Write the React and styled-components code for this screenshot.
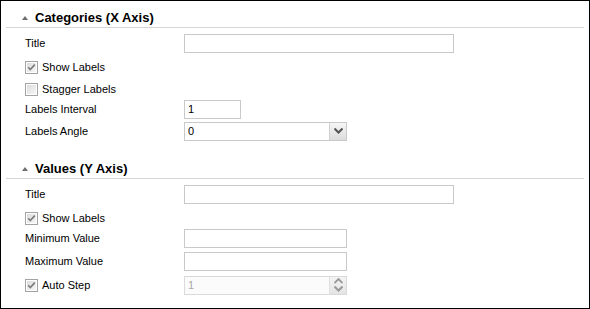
import React from "react";
import styled, { createGlobalStyle } from "styled-components";

const Global = createGlobalStyle`
  html, body { margin: 0; padding: 0; background: #fff; }
  body { font-family: "Liberation Sans", Arial, sans-serif; }
`;

const Panel = styled.div`
  width: 590px;
  height: 309px;
  box-sizing: border-box;
  border: 1px solid #000;
  background: #fff;
  color: #000;
  font-family: "Liberation Sans", Arial, sans-serif;
  font-size: 11px;
  overflow: hidden;
`;

const Section = styled.section`
  display: flex;
  flex-direction: column;
  margin-top: ${(p) => (p.$first ? "0" : "10px")};
`;

const Header = styled.div`
  display: flex;
  align-items: flex-end;
  height: 27px;
  padding: 0 0 1px 16px;
  margin: 0 5px;
  box-sizing: border-box;
  border-bottom: 1px solid #d6d6d6;
`;

const Arrow = styled.span`
  width: 0;
  height: 0;
  border-left: 3.5px solid transparent;
  border-right: 3.5px solid transparent;
  border-bottom: 4px solid #6e6e6e;
  margin: 0 7px 6px 0;
`;

const HeaderText = styled.span`
  font-weight: bold;
  font-size: 13px;
  line-height: 16px;
`;

const Rows = styled.div`
  display: flex;
  flex-direction: column;
  padding: 4px 0 0 24px;
`;

const Row = styled.div`
  display: flex;
  align-items: center;
  height: 22px;
  box-sizing: content-box;
  padding-top: ${(p) => p.$shift || 0}px;
  margin-bottom: ${(p) => -(p.$shift || 0)}px;
`;

const Label = styled.span`
  width: 159px;
  flex: none;
  white-space: nowrap;
`;

const TextInput = styled.div`
  box-sizing: border-box;
  width: ${(p) => p.$w}px;
  height: 19px;
  border: 1px solid #c9c9c9;
  background: #fff;
  display: flex;
  align-items: center;
  padding-left: 3px;
  font-size: 11px;
`;

const SelectBox = styled.div`
  box-sizing: border-box;
  width: 163px;
  height: 19px;
  border: 1px solid #c9c9c9;
  background: #fff;
  display: flex;
  align-items: center;
`;

const SelectValue = styled.span`
  flex: 1;
  padding-left: 3px;
`;

const SelectButton = styled.span`
  width: 17px;
  height: 100%;
  box-sizing: border-box;
  border-left: 1px solid #d0d0d0;
  background: linear-gradient(#f6f6f6, #dcdcdc);
  display: flex;
  align-items: center;
  justify-content: center;
`;

const SpinBox = styled.div`
  box-sizing: border-box;
  width: 163px;
  height: 19px;
  border: 1px solid #dadada;
  background: #fbfbfb;
  display: flex;
  align-items: center;
  color: #a8a8a8;
`;

const SpinButtons = styled.span`
  width: 17px;
  height: 100%;
  box-sizing: border-box;
  border-left: 1px solid #e0e0e0;
  background: linear-gradient(#f4f4f4, #e4e4e4);
  display: flex;
  flex-direction: column;
  align-items: center;
  justify-content: space-around;
`;

const CheckRow = styled.label`
  display: flex;
  align-items: center;
  gap: 4px;
`;

const Checkbox = ({ checked }) => (
  <svg width="13" height="13" viewBox="0 0 13 13">
    <defs>
      <linearGradient id="cbg" x1="0" y1="0" x2="1" y2="1">
        <stop offset="0" stopColor="#dcdcdc" />
        <stop offset="1" stopColor="#f7f7f7" />
      </linearGradient>
    </defs>
    <rect x="0.5" y="0.5" width="12" height="12" fill="#fff" stroke="#a3a3a3" />
    <rect x="2" y="2" width="9" height="9" fill="url(#cbg)" />
    {checked && (
      <path d="M3.2 6.3 L5.3 8.6 L9.8 3.6" fill="none" stroke="#7d7d7d" strokeWidth="1.7" />
    )}
  </svg>
);

const ChevronDown = ({ color = "#555" }) => (
  <svg width="9" height="6" viewBox="0 0 9 6">
    <path d="M0.5 0.5 L4.5 4.5 L8.5 0.5" fill="none" stroke={color} strokeWidth="2" />
  </svg>
);

const ChevronUp = ({ color = "#999" }) => (
  <svg width="9" height="6" viewBox="0 0 9 6">
    <path d="M0.5 5 L4.5 1 L8.5 5" fill="none" stroke={color} strokeWidth="1.8" />
  </svg>
);

const FieldRow = ({ label, children, shift }) => (
  <Row $shift={shift}>
    <Label>{label}</Label>
    {children}
  </Row>
);

const CheckField = ({ label, checked }) => (
  <Row $shift={2}>
    <CheckRow>
      <Checkbox checked={checked} />
      <span>{label}</span>
    </CheckRow>
  </Row>
);

const SectionHeader = ({ title }) => (
  <Header>
    <Arrow />
    <HeaderText>{title}</HeaderText>
  </Header>
);

export default function App() {
  return (
    <>
      <Global />
      <Panel>
        <Section $first>
          <SectionHeader title="Categories (X Axis)" />
          <Rows>
            <FieldRow label="Title">
              <TextInput $w={270} />
            </FieldRow>
            <CheckField label="Show Labels" checked />
            <CheckField label="Stagger Labels" />
            <FieldRow label="Labels Interval">
              <TextInput $w={57}>1</TextInput>
            </FieldRow>
            <FieldRow label="Labels Angle">
              <SelectBox>
                <SelectValue>0</SelectValue>
                <SelectButton>
                  <ChevronDown />
                </SelectButton>
              </SelectBox>
            </FieldRow>
          </Rows>
        </Section>
        <Section>
          <SectionHeader title="Values (Y Axis)" />
          <Rows>
            <FieldRow label="Title">
              <TextInput $w={270} />
            </FieldRow>
            <CheckField label="Show Labels" checked />
            <FieldRow label="Minimum Value">
              <TextInput $w={163} />
            </FieldRow>
            <FieldRow label="Maximum Value" shift={1}>
              <TextInput $w={163} />
            </FieldRow>
            <Row $shift={3}>
              <Label>
                <CheckRow>
                  <Checkbox checked />
                  <span>Auto Step</span>
                </CheckRow>
              </Label>
              <SpinBox>
                <SelectValue>1</SelectValue>
                <SpinButtons>
                  <ChevronUp />
                  <ChevronDown color="#999" />
                </SpinButtons>
              </SpinBox>
            </Row>
          </Rows>
        </Section>
      </Panel>
    </>
  );
}
